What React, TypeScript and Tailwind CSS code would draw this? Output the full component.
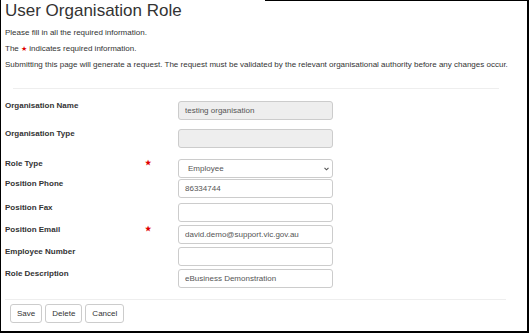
import React from "react";

const font = { fontFamily: '"Liberation Sans", Arial, sans-serif' };

function Star() {
  return <span className="text-[#e00000] text-[7px] leading-none">★</span>;
}

type RowProps = {
  label: string;
  required?: boolean;
  mt: string;
  children: React.ReactNode;
};

function Row({ label, required, mt, children }: RowProps) {
  return (
    <div className={`flex items-start ${mt}`}>
      <div className="relative w-[173px] shrink-0 text-[8px] leading-[10px] font-bold text-[#333]">
        {label}
        {required && (
          <span className="absolute left-[140px] top-[-1px]">
            <Star />
          </span>
        )}
      </div>
      <div className="w-[155px]">{children}</div>
    </div>
  );
}

function TextInput({ value = "", disabled = false }: { value?: string; disabled?: boolean }) {
  return (
    <input
      readOnly
      value={value}
      className={`block w-full h-[19px] rounded-[3px] border border-[#cccccc] px-[6px] text-[8px] text-[#555] outline-none ${
        disabled ? "bg-[#eeeeee]" : "bg-white"
      }`}
      style={font}
    />
  );
}

export default function App() {
  return (
    <div
      className="w-[529px] h-[333px] bg-white border-l border-r-2 border-b-2 border-black text-[#333] overflow-hidden"
      style={font}
    >
      <div className="h-[1px] ml-[264px] bg-black" />
      <div className="pl-[4px]">
        <h1 className="text-[17px] leading-[20px] font-normal text-[#333]">User Organisation Role</h1>
        <p className="mt-[6px] text-[8px] leading-[12px]">Please fill in all the required information.</p>
        <p className="mt-[4px] text-[8px] leading-[12px]">
          The <Star /> indicates required information.
        </p>
        <p className="mt-[4px] text-[8px] leading-[12px]">
          Submitting this page will generate a request. The request must be validated by the relevant
          organisational authority before any changes occur.
        </p>
        <div className="mt-[17px] ml-[8px] w-[486px] h-[1px] bg-[#eeeeee]" />

        <Row label="Organisation Name" mt="mt-[12px]">
          <TextInput value="testing organisation" disabled />
        </Row>
        <Row label="Organisation Type" mt="mt-[9px]">
          <TextInput disabled />
        </Row>
        <Row label="Role Type" required mt="mt-[11px]">
          <div className="relative">
            <select
              value="Employee"
              onChange={() => {}}
              className="block w-full h-[19px] appearance-none rounded-[3px] border border-[#cccccc] bg-white pl-[9px] text-[8px] text-[#555] outline-none"
              style={font}
            >
              <option>Employee</option>
            </select>
            <svg
              className="absolute right-[4px] top-[8px] pointer-events-none"
              width="5"
              height="4"
              viewBox="0 0 5 4"
            >
              <path d="M0.5 0.8 L2.5 2.8 L4.5 0.8" stroke="#555" strokeWidth="1.1" fill="none" />
            </svg>
          </div>
        </Row>
        <Row label="Position Phone" mt="mt-[1px]">
          <TextInput value="86334744" />
        </Row>
        <Row label="Position Fax" mt="mt-[5px]">
          <TextInput />
        </Row>
        <Row label="Position Email" required mt="mt-[3px]">
          <TextInput value="david.demo@support.vic.gov.au" />
        </Row>
        <Row label="Employee Number" mt="mt-[3px]">
          <TextInput />
        </Row>
        <Row label="Role Description" mt="mt-[3px]">
          <TextInput value="eBusiness Demonstration" />
        </Row>

        <div className="mt-[11px] w-[501px] h-[1px] bg-[#eeeeee]" />
        <div className="mt-[4px] ml-[5px] flex gap-[3px]">
          {["Save", "Delete", "Cancel"].map((b) => (
            <button
              key={b}
              className="h-[19px] rounded-[3px] border border-[#cccccc] bg-white px-[6px] text-[8px] text-[#333]"
              style={font}
            >
              {b}
            </button>
          ))}
        </div>
      </div>
    </div>
  );
}
